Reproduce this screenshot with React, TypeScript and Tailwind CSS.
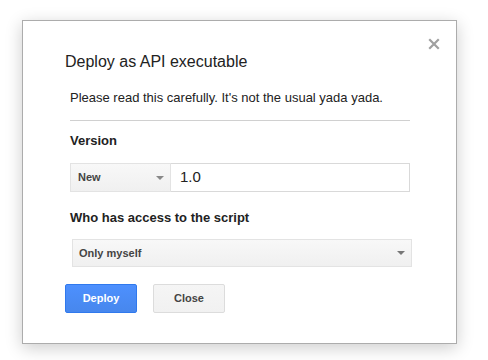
export default function App() {
  return (
    <div className="min-h-screen bg-white pl-[22px] pt-[20px] font-['Liberation_Sans',Arial,sans-serif] text-[#222]">
      <div className="relative flex h-[324px] w-[435px] flex-col border border-[#acacac] bg-white pl-[42px] pr-[46px] shadow-[0_4px_16px_rgba(0,0,0,0.2)]">
        {/* close button */}
        <button className="absolute right-[16px] top-[17px] flex h-[12px] w-[12px] items-center justify-center">
          <svg viewBox="0 0 12 12" className="h-[12px] w-[12px]" stroke="#a0a0a0" strokeWidth="2.2" strokeLinecap="square">
            <path d="M2 2 L10 10 M10 2 L2 10" />
          </svg>
        </button>

        <h1 className="mt-[31px] text-[16px] leading-[20px]">Deploy as API executable</h1>

        <div className="ml-[5px] flex flex-col">
          <p className="mt-[18px] text-[13px] leading-[16px]">
            Please read this carefully. It's not the usual yada yada.
          </p>
          <div className="mt-[14px] h-px w-[340px] bg-[#d0d0d0]" />

          <div className="mt-[12px] text-[13px] font-bold leading-[16px]">Version</div>
          <div className="mt-[14px] flex h-[29px] w-[340px]">
            <div className="flex w-[101px] items-center justify-between border border-[#e3e3e3] bg-gradient-to-b from-[#f8f8f8] to-[#f0f0f0] pl-[7px] pr-[6px]">
              <span className="text-[11px] font-bold text-[#444]">New</span>
              <span className="h-0 w-0 border-x-[4px] border-t-[4px] border-x-transparent border-t-[#888]" />
            </div>
            <div className="flex flex-1 items-center border border-l-0 border-[#d9d9d9] bg-white pl-[9px] text-[15px] text-[#222]">
              1.0
            </div>
          </div>

          <div className="mt-[18px] text-[13px] font-bold leading-[16px]">Who has access to the script</div>
          <div className="ml-[2px] mt-[13px] flex h-[28px] w-[340px] items-center justify-between border border-[#e3e3e3] bg-gradient-to-b from-[#f8f8f8] to-[#f0f0f0] pl-[6px] pr-[6px]">
            <span className="text-[11px] font-bold text-[#444]">Only myself</span>
            <span className="h-0 w-0 border-x-[4px] border-t-[4px] border-x-transparent border-t-[#777]" />
          </div>
        </div>

        <div className="mt-[17px] flex gap-[16px]">
          <button className="h-[29px] w-[72px] rounded-[2px] border border-[#3079ed] bg-gradient-to-b from-[#4d90fe] to-[#4787ed] text-[11px] font-bold text-white">
            Deploy
          </button>
          <button className="h-[29px] w-[72px] rounded-[2px] border border-[#dcdcdc] bg-gradient-to-b from-[#f5f5f5] to-[#f1f1f1] text-[11px] font-bold text-[#444]">
            Close
          </button>
        </div>
      </div>
    </div>
  );
}
